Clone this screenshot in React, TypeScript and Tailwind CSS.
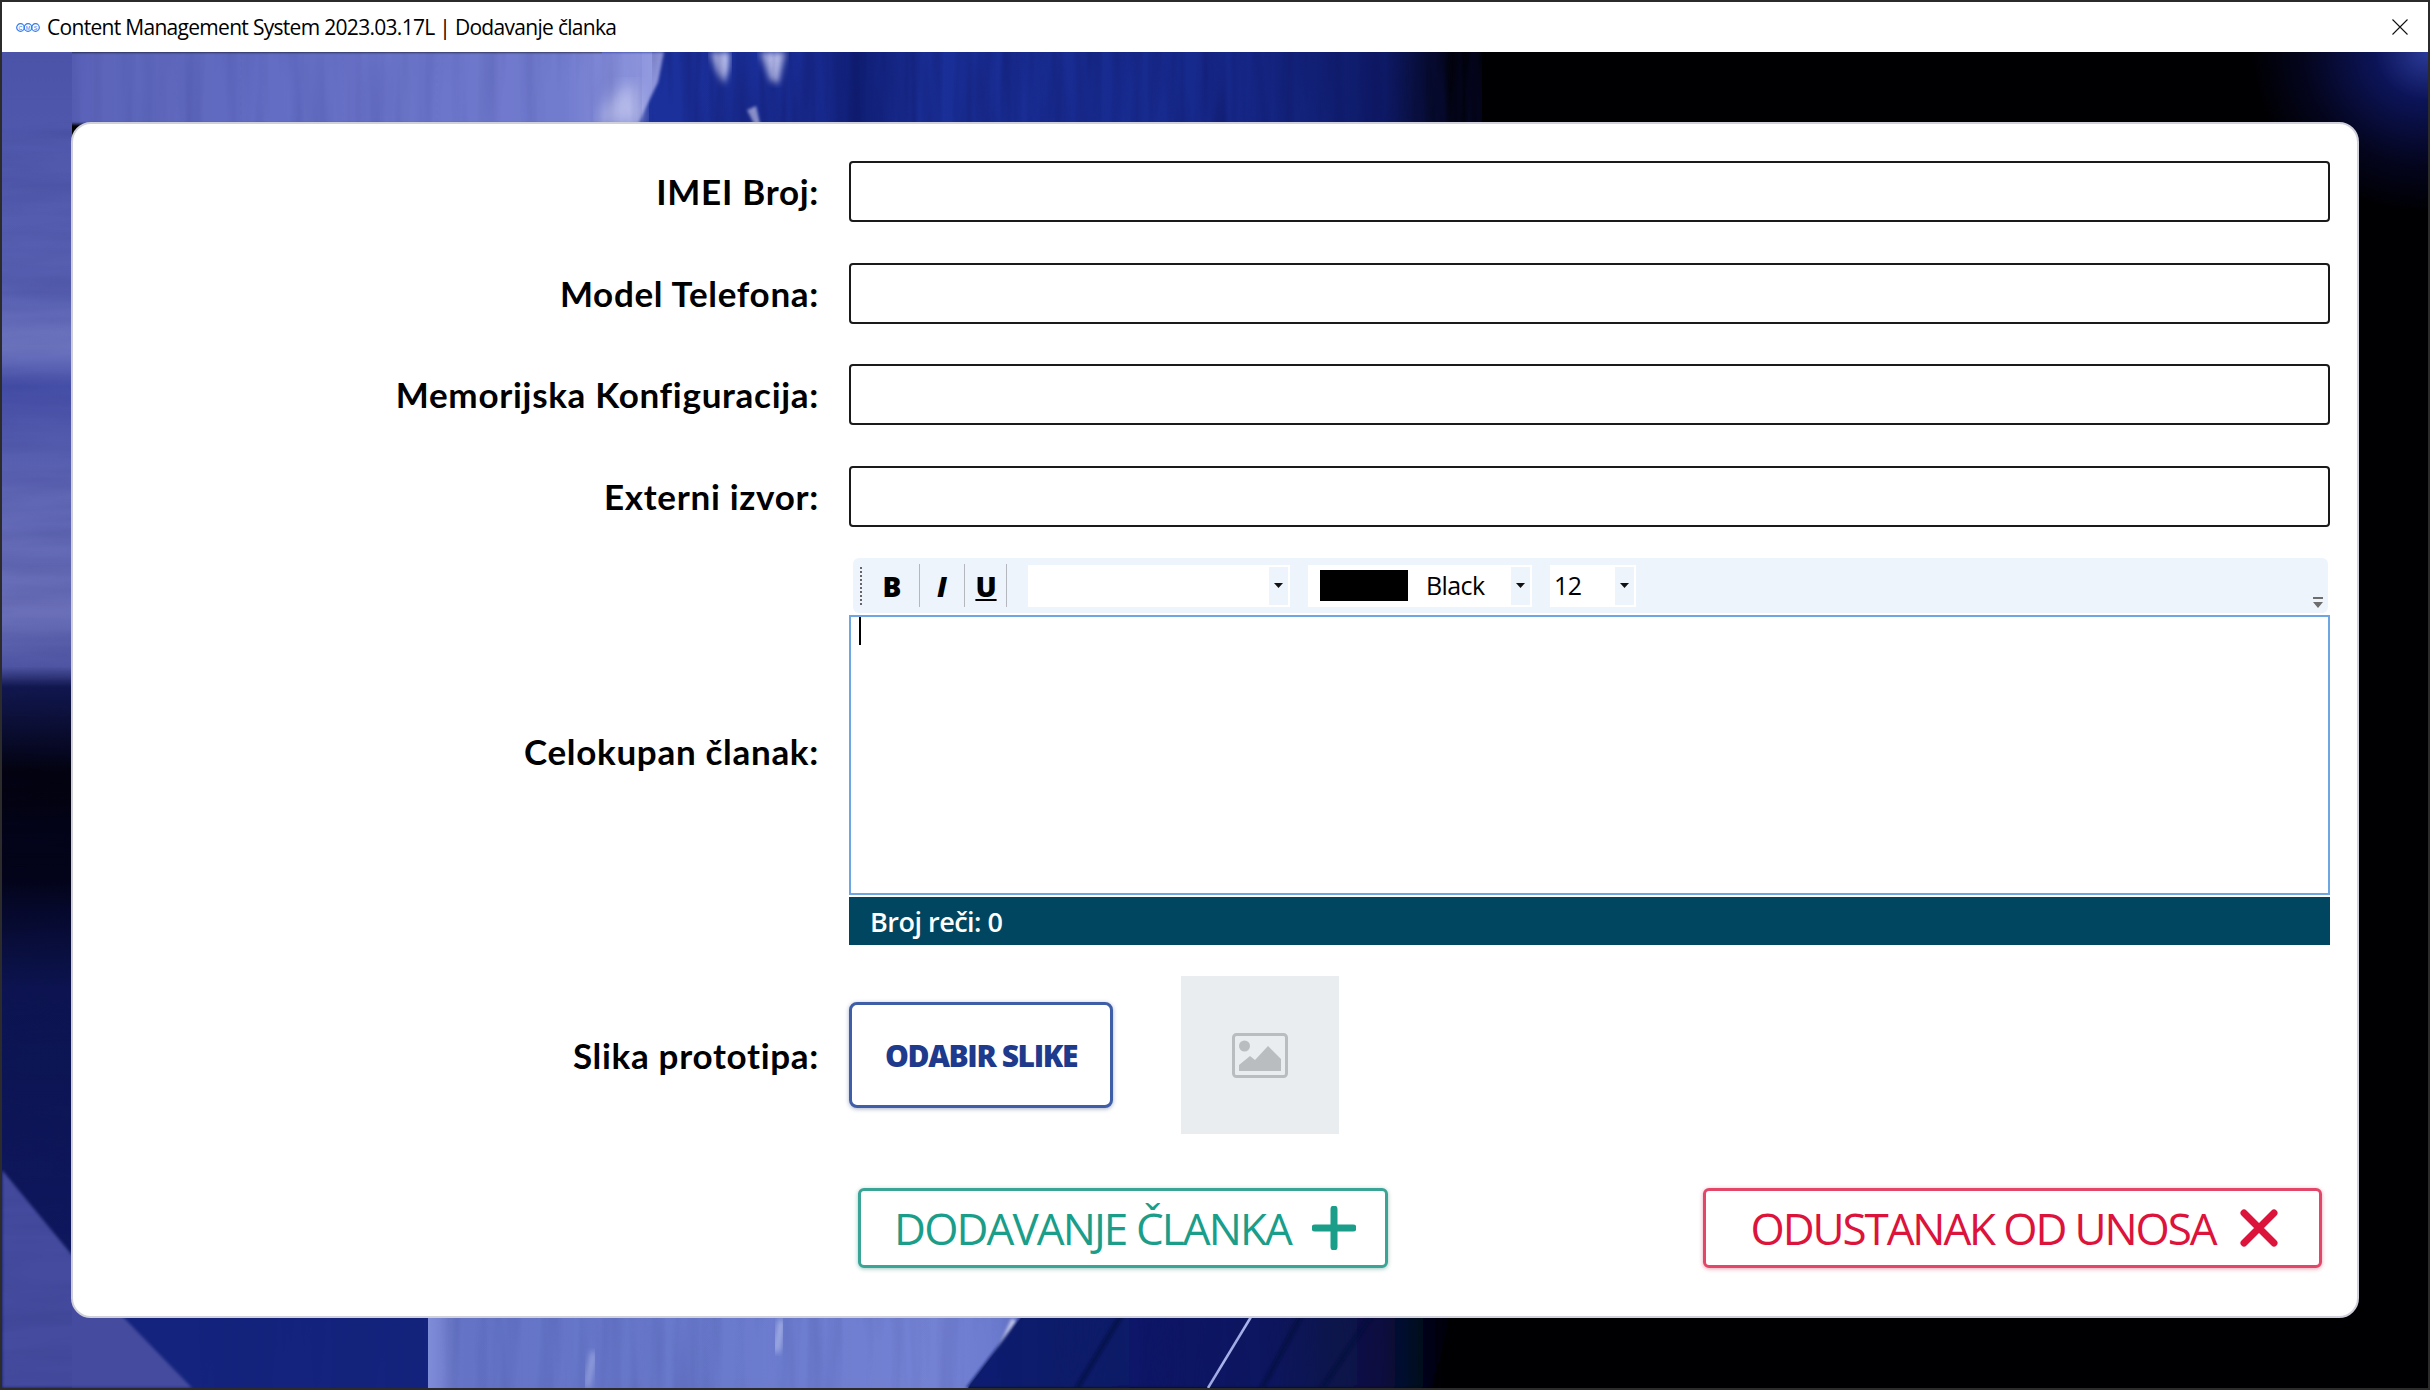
import React from "react";

const labelCls =
  "w-[746px] shrink-0 text-right text-[35px] font-bold tracking-[0.7px] text-black font-['Lato','Noto_Sans',sans-serif] leading-none";
const uiFont = "font-['Open_Sans','Noto_Sans',sans-serif]";

function Field({ label, cls }: { label: string; cls: string }) {
  return (
    <div className={`flex items-center h-[61px] gap-[30px] ${cls}`}>
      <div className={labelCls}>{label}</div>
      <input className="w-[1481px] h-full border-2 border-[#1a1a1a] rounded-[4px] bg-white outline-none" readOnly />
    </div>
  );
}

function Arrow() {
  return (
    <span className="w-[19px] h-[38px] bg-[#edf4fc] flex items-center justify-center shrink-0">
      <svg width="9" height="5" viewBox="0 0 9 5">
        <path d="M0 0H9L4.5 5Z" fill="#111" />
      </svg>
    </span>
  );
}

function Background() {
  return (
    <svg className="absolute inset-0 w-full h-full" viewBox="0 0 2426 1336" preserveAspectRatio="none">
      <defs>
        <linearGradient id="lightTop" x1="0" y1="0" x2="1" y2="0">
          <stop offset="0" stopColor="#5660b4" />
          <stop offset="0.45" stopColor="#646ec4" />
          <stop offset="0.85" stopColor="#727ccf" />
          <stop offset="1" stopColor="#979ee2" />
        </linearGradient>
        <linearGradient id="deep" x1="0" y1="0" x2="1" y2="0">
          <stop offset="0" stopColor="#1c319c" />
          <stop offset="0.24" stopColor="#1a2e98" />
          <stop offset="0.29" stopColor="#0f1d72" />
          <stop offset="0.36" stopColor="#1a2f98" />
          <stop offset="0.72" stopColor="#16288a" />
          <stop offset="0.89" stopColor="#0e1a66" />
          <stop offset="0.97" stopColor="#010108" />
          <stop offset="1" stopColor="#000003" />
        </linearGradient>
        <linearGradient id="left" x1="0" y1="0" x2="0" y2="1">
          <stop offset="0" stopColor="#4a53a8" />
          <stop offset="0.18" stopColor="#5860b2" />
          <stop offset="0.22" stopColor="#7078c2" />
          <stop offset="0.25" stopColor="#454ea6" />
          <stop offset="0.33" stopColor="#5f66b4" />
          <stop offset="0.42" stopColor="#6a6fb8" />
          <stop offset="0.46" stopColor="#5258a6" />
          <stop offset="0.475" stopColor="#12184f" />
          <stop offset="0.54" stopColor="#02020f" />
          <stop offset="0.62" stopColor="#03041a" />
          <stop offset="0.7" stopColor="#0c1450" />
          <stop offset="1" stopColor="#101a64" />
        </linearGradient>
        <linearGradient id="bottomLight" x1="0" y1="0" x2="1" y2="0">
          <stop offset="0" stopColor="#7f8cd8" />
          <stop offset="0.06" stopColor="#6473c6" />
          <stop offset="0.5" stopColor="#6a7acc" />
          <stop offset="0.85" stopColor="#7482d4" />
          <stop offset="1" stopColor="#6878cc" />
        </linearGradient>
        <linearGradient id="bottomDark" x1="0" y1="0" x2="1" y2="0">
          <stop offset="0" stopColor="#0f1c70" />
          <stop offset="0.6" stopColor="#0c1760" />
          <stop offset="0.85" stopColor="#081040" />
          <stop offset="1" stopColor="#000003" />
        </linearGradient>
        <radialGradient id="corner" cx="1" cy="0" r="1">
          <stop offset="0" stopColor="#2a3a98" />
          <stop offset="0.3" stopColor="#0c1458" />
          <stop offset="0.7" stopColor="#04051e" />
          <stop offset="1" stopColor="#000003" />
        </radialGradient>
        <filter id="soft"><feGaussianBlur stdDeviation="1.5" /></filter>
        <filter id="soft3"><feGaussianBlur stdDeviation="3" /></filter>
        <filter id="soft2"><feGaussianBlur stdDeviation="8" /></filter>
        <filter id="vgrain" x="0" y="0" width="100%" height="100%" colorInterpolationFilters="sRGB">
          <feTurbulence type="fractalNoise" baseFrequency="0.05 0.004" numOctaves="3" seed="4" />
          <feColorMatrix values="0 0 0 0 0.05 0 0 0 0 0.07 0 0 0 0 0.35 1.6 0 0 0 -0.6" />
        </filter>
        <filter id="hgrain" x="0" y="0" width="100%" height="100%" colorInterpolationFilters="sRGB">
          <feTurbulence type="fractalNoise" baseFrequency="0.006 0.05" numOctaves="3" seed="9" />
          <feColorMatrix values="0 0 0 0 0.05 0 0 0 0 0.07 0 0 0 0 0.35 1.6 0 0 0 -0.6" />
        </filter>
      </defs>
      <rect width="2426" height="1336" fill="#000003" />
      {/* top strip */}
      <rect x="600" y="0" width="880" height="80" fill="url(#deep)" />
      <polygon points="0,0 662,0 656,30 636,72 0,72" fill="url(#lightTop)" filter="url(#soft)" />
      <path d="M596 72C606 46 618 36 632 30L642 72Z" fill="#b8bdec" filter="url(#soft2)" />
      <path d="M708 0L714 18L722 32L727 16L728 0Z" fill="#b9bfee" filter="url(#soft3)" />
      <path d="M758 0L768 28L776 32L784 0Z" fill="#b9bfee" filter="url(#soft3)" />
      <path d="M745 58L752 72H758L754 54Z" fill="#a9b0e6" filter="url(#soft)" />
      <rect x="650" y="0" width="830" height="72" filter="url(#vgrain)" opacity="0.6" />
      <rect x="0" y="0" width="640" height="72" filter="url(#vgrain)" opacity="0.14" />
      {/* top right */}
      <rect x="2250" y="0" width="176" height="160" fill="url(#corner)" />
      {/* bottom navy goes under the left strip's wedge */}
      <polygon points="60,1250 430,1250 430,1336 60,1336" fill="#14247e" />
      {/* left strip */}
      <rect x="0" y="0" width="70" height="1336" fill="url(#left)" />
      <polygon points="0,1118 70,1203 122,1266 190,1336 0,1336" fill="#454c9e" filter="url(#soft)" />
      <rect x="0" y="70" width="70" height="1266" filter="url(#hgrain)" opacity="0.14" />
      {/* bottom strip */}
      <polygon points="426,1260 1024,1260 966,1336 426,1336" fill="url(#bottomLight)" />
      <path d="M428 1260V1336" stroke="#c9cef0" strokeWidth="2" filter="url(#soft)" />
      <path d="M1012 1268L984 1330" stroke="#c6ccf0" strokeWidth="6" filter="url(#soft)" />
      <path d="M780 1268L774 1300" stroke="#a8b4e8" strokeWidth="7" filter="url(#soft3)" />
      <path d="M592 1300L584 1336" stroke="#98a4e0" strokeWidth="6" filter="url(#soft3)" />
      <polygon points="1022,1260 1450,1260 1430,1336 964,1336" fill="url(#bottomDark)" filter="url(#soft)" />
      <path d="M1120 1262L1075 1336M1300 1262L1260 1336M1370 1262L1320 1336" stroke="#040a3a" strokeWidth="5" opacity="0.6" filter="url(#soft)" />
      <path d="M1252 1260L1206 1336" stroke="#a9b4ec" strokeWidth="2.5" />
      <rect x="190" y="1264" width="1250" height="72" filter="url(#vgrain)" opacity="0.14" />
    </svg>
  );
}

export default function App() {
  return (
    <div className="w-[2430px] h-[1390px] flex flex-col bg-white border-2 border-[#2b2b2b] overflow-hidden">
      <div className="h-[50px] shrink-0 bg-white flex items-center pl-[14px] pr-[20px]">
        <svg width="24" height="9" viewBox="0 0 24 9" className="shrink-0">
          <g fill="none" stroke="#2f7bf0" strokeWidth="1.2">
            <circle cx="4.5" cy="4.5" r="3.8" />
            <circle cx="12" cy="4.5" r="3.8" />
            <circle cx="19.5" cy="4.5" r="3.8" />
          </g>
          <g fill="#2f7bf0" fontSize="5.5" fontFamily="Liberation Sans, sans-serif" textAnchor="middle">
            <text x="4.5" y="6.5">C</text>
            <text x="12" y="6.5">M</text>
            <text x="19.5" y="6.5">S</text>
          </g>
        </svg>
        <span className={`ml-[7px] mt-[2px] text-[21px] text-black tracking-[-0.7px] ${uiFont}`}>
          Content Management System 2023.03.17L | Dodavanje članka
        </span>
        <svg width="16" height="16" viewBox="0 0 16 16" className="ml-auto">
          <path d="M0.5 0.5L15.5 15.5M15.5 0.5L0.5 15.5" stroke="#111" strokeWidth="1.1" />
        </svg>
      </div>

      <div className="relative flex-1 px-[69px] pt-[70px]">
        <Background />
        <div className="relative w-[2288px] h-[1196px] bg-white rounded-[20px] border-2 border-[#cfd0da] pt-[37px]">
          <div className="flex flex-col">
            <Field label="IMEI Broj:" cls="" />
            <Field label="Model Telefona:" cls="mt-[41px]" />
            <Field label="Memorijska Konfiguracija:" cls="mt-[40px]" />
            <Field label="Externi izvor:" cls="mt-[41px]" />
          </div>

          <div className="mt-[31px] flex items-center gap-[30px]">
            <div className={labelCls}>Celokupan članak:</div>
            <div className="w-[1481px] flex flex-col">
              <div className="relative h-[55px] ml-[4px] mr-[2px] bg-[#edf4fc] rounded-[6px] flex items-center">
                <span className="ml-[7px] h-[38px] w-[2px] border-l-2 border-dotted border-[#666]" />
                <span className="ml-[20px] w-[20px] text-center text-[28px] font-extrabold leading-none text-black font-['Open_Sans',sans-serif]">B</span>
                <span className="ml-[17px] w-px h-[43px] bg-[#b4b8be]" />
                <span className="ml-[15px] w-[14px] text-center text-[28px] font-extrabold italic leading-none text-black font-['Open_Sans',sans-serif]">I</span>
                <span className="ml-[15px] w-px h-[43px] bg-[#b4b8be]" />
                <span className="ml-[10px] w-[22px] text-center text-[28px] font-extrabold underline leading-none text-black font-['Open_Sans',sans-serif]">U</span>
                <span className="ml-[9px] w-px h-[43px] bg-[#b4b8be]" />
                <div className="ml-[21px] w-[262px] h-[42px] bg-white flex items-center justify-end pr-[2px]">
                  <Arrow />
                </div>
                <div className="ml-[18px] w-[224px] h-[42px] bg-white flex items-center pr-[2px]">
                  <span className="ml-[12px] w-[88px] h-[31px] bg-black shrink-0" />
                  <span className={`ml-[18px] text-[25px] text-black tracking-[-0.6px] ${uiFont}`}>Black</span>
                  <span className="ml-auto"><Arrow /></span>
                </div>
                <div className="ml-[18px] w-[86px] h-[42px] bg-white flex items-center pr-[2px]">
                  <span className={`ml-[4px] text-[25px] text-black tracking-[-0.6px] ${uiFont}`}>12</span>
                  <span className="ml-auto"><Arrow /></span>
                </div>
                <svg width="10" height="12" viewBox="0 0 10 12" className="absolute right-[5px] bottom-[4px]">
                  <path d="M0 0H10V2H0ZM0 5H10L5 11Z" fill="#6d6d6d" />
                </svg>
              </div>
              <div className="relative mt-[2px] h-[280px] bg-white border-2 border-[#6ea6e2]">
                <span className="absolute left-[8px] top-0 w-[2px] h-[28px] bg-black" />
              </div>
              <div className={`mt-[2px] h-[48px] bg-[#004660] flex items-center pl-[21px] pt-[2px] text-[27px] font-semibold text-white tracking-[-0.5px] ${uiFont}`}>
                Broj reči: 0
              </div>
            </div>
          </div>

          <div className="mt-[31px] flex items-center gap-[30px]">
            <div className={labelCls}>Slika prototipa:</div>
            <button className="w-[264px] h-[106px] rounded-[8px] border-[3px] border-[#3f5ea8] bg-white shadow-[0_1px_4px_rgba(40,60,120,0.4)] flex items-center justify-center">
              <span className={`text-[30px] font-extrabold text-[#1d3a8c] tracking-[-1.4px] ${uiFont}`}>ODABIR SLIKE</span>
            </button>
            <div className="ml-[38px] w-[158px] h-[158px] bg-[#e9edf0] flex items-center justify-center">
              <svg width="56" height="45" viewBox="0 0 56 45">
                <rect x="1.5" y="1.5" width="53" height="42" rx="3" fill="none" stroke="#b9bdc0" strokeWidth="3" />
                <circle cx="12.5" cy="13" r="5.5" fill="#b9bdc0" />
                <path d="M7 38V32L18 23L23 27L36 13L49 26V38Z" fill="#b9bdc0" />
              </svg>
            </div>
          </div>

          <div className="mt-[54px] flex items-center justify-between pl-[785px] pr-[35px]">
            <button className="w-[530px] h-[80px] pl-[4px] rounded-[6px] border-[3px] border-[#3aa596] bg-white shadow-[0_1px_4px_rgba(20,120,100,0.4)] flex items-center justify-center gap-[21px]">
              <span className={`text-[44px] font-medium text-[#1a9e8a] tracking-[-1.9px] ${uiFont}`}>DODAVANJE ČLANKA</span>
              <svg width="44" height="44" viewBox="0 0 44 44" className="shrink-0">
                <path d="M22 3V41M3 22H41" stroke="#1a9e8a" strokeWidth="7" strokeLinecap="round" />
              </svg>
            </button>
            <button className="w-[619px] h-[80px] pl-[4px] rounded-[6px] border-[3px] border-[#e2476a] bg-white shadow-[0_1px_4px_rgba(200,30,70,0.4)] flex items-center justify-center gap-[25px]">
              <span className={`text-[44px] font-medium text-[#dc143c] tracking-[-2.1px] ${uiFont}`}>ODUSTANAK OD UNOSA</span>
              <svg width="38" height="38" viewBox="0 0 38 38" className="shrink-0">
                <path d="M4 4L34 34M34 4L4 34" stroke="#dc143c" strokeWidth="7" strokeLinecap="round" />
              </svg>
            </button>
          </div>
        </div>
      </div>
    </div>
  );
}
